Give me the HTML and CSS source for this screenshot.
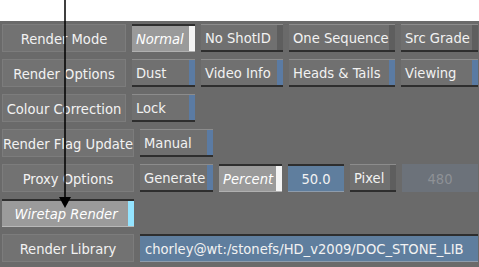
FILE: index.html
```html
<!DOCTYPE html>
<html lang="en">
<head>
  <meta charset="UTF-8">
  <meta name="viewport" content="width=device-width, initial-scale=1.0">
  <title>Render Settings</title>
  <link rel="stylesheet" href="styles.css">
</head>
<body>
  <div class="top"></div>
  <div class="panel">
    <div class="row">
      <div class="label w124">Render Mode</div>
      <div class="btn on w63">Normal</div>
      <div class="btn w82">No ShotID</div>
      <div class="btn w106">One Sequence</div>
      <div class="btn w77">Src Grade</div>
    </div>
    <div class="row">
      <div class="label w124">Render Options</div>
      <div class="btn blue w63">Dust</div>
      <div class="btn blue w82">Video Info</div>
      <div class="btn blue w106">Heads &amp; Tails</div>
      <div class="btn blue w77">Viewing</div>
    </div>
    <div class="row">
      <div class="label w124">Colour Correction</div>
      <div class="btn blue w63">Lock</div>
    </div>
    <div class="row">
      <div class="label w132">Render Flag Update</div>
      <div class="btn blue w73">Manual</div>
    </div>
    <div class="row">
      <div class="label w132">Proxy Options</div>
      <div class="btn blue w73">Generate</div>
      <div class="btn on w63">Percent</div>
      <div class="field center w56">50.0</div>
      <div class="btn w46">Pixel</div>
      <div class="field off center w76">480</div>
    </div>
    <div class="row">
      <div class="btn wiretap w132">Wiretap Render</div>
    </div>
    <div class="row">
      <div class="label w132">Render Library</div>
      <div class="field w338">chorley@wt:/stonefs/HD_v2009/DOC_STONE_LIB</div>
    </div>
  </div>

  <svg class="arrow" width="80" height="215" viewBox="0 0 80 215">
    <line x1="65" y1="0" x2="65" y2="200" stroke="#000" stroke-width="1.5"/>
    <polygon points="59,197 71,197 65,208" fill="#000"/>
  </svg>
</body>
</html>
```

FILE: styles.css
```css
body{
  margin: 0;
  background: #fff;
  font-family: "DejaVu Sans Condensed", "DejaVu Sans", sans-serif;
  font-size: 14.6px;
  color: #f2f2f2;
  position: relative;
  width: 479px;
  height: 267px;
  overflow: hidden;
}
.top{
  height: 21px;
}
.panel{
  background: #6a6a6a;
  height: 246px;
  padding: 3px 1px 0 2px;
  box-sizing: border-box;
  display: flex;
  flex-direction: column;
  gap: 7px;
}
.row{
  display: flex;
  gap: 6px;
  height: 28px;
}
.label{
  box-sizing: border-box;
  display: flex;
  align-items: center;
  justify-content: center;
  background: #727272;
  border: 1px solid #7c7c7c;
  white-space: nowrap;
}
.btn{
  box-sizing: border-box;
  position: relative;
  display: flex;
  align-items: center;
  padding: 0 10px 0 4px;
  background: #707070;
  border-top: 1px solid #8c8c8c;
  border-bottom: 2px solid #2e2e2e;
  white-space: nowrap;
}
.btn::after{
  content: "";
  position: absolute;
  top: 0;
  right: 0;
  bottom: 0;
  width: 6px;
  background: #5e5e5e;
}
.btn.blue::after{
  background: #5b7ba3;
}
.btn.on{
  background: #9a9a9a;
  border-top: 2px solid #2e2e2e;
  border-bottom: 1px solid #b0b0b0;
  font-style: italic;
  color: #fff;
}
.btn.on::after{
  background: #f4f4f4;
}
.btn.wiretap{
  justify-content: center;
  padding-right: 8px;
  background: #9b9b9b;
  border-top: 2px solid #2e2e2e;
  border-bottom: 1px solid #b8b8b8;
  font-style: italic;
  color: #fff;
}
.btn.wiretap::after{
  background: #94e4ff;
}
.field{
  box-sizing: border-box;
  display: flex;
  align-items: center;
  padding: 0 5px;
  background: #5f7e9e;
  border-top: 2px solid #2e2e2e;
  border-bottom: 1px solid #8e9cac;
  white-space: nowrap;
}
.field.center{
  justify-content: center;
}
.field.off{
  background: #6c727a;
  border-top: 1px solid #6c727a;
  border-bottom: 1px solid #6c727a;
  color: #8e9196;
}
.w46{ width: 46px; }
.w56{ width: 56px; }
.w63{ width: 63px; }
.w73{ width: 73px; }
.w76{ width: 76px; }
.w77{ width: 77px; }
.w82{ width: 82px; }
.w106{ width: 106px; }
.w124{ width: 124px; }
.w132{ width: 132px; }
.w338{ width: 338px; }
.arrow{
  position: absolute;
  left: 0;
  top: 0;
}
```
